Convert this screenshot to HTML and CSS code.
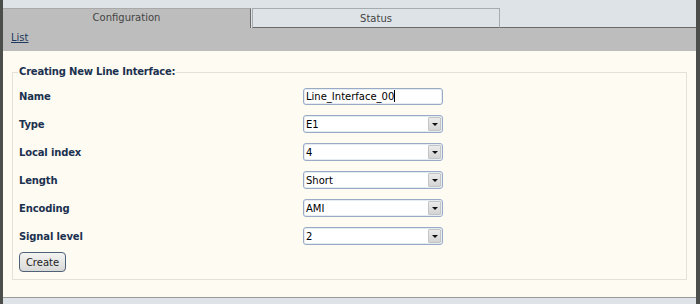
FILE: index.html
```html
<!DOCTYPE html>
<html>
<head>
<meta charset="utf-8">
<link rel="stylesheet" href="styles.css">
</head>
<body>
<div class="page">
  <div class="tabs">
    <div class="tab active">Configuration</div>
    <div class="tab">Status</div>
    <div class="tab-rest"></div>
  </div>
  <div class="bar"><a href="#" class="link">List</a></div>
  <div class="content">
    <fieldset class="box">
      <legend class="legend">Creating New Line Interface:</legend>
      <div class="form">
        <div class="label">Name</div>
        <div class="field"><div class="textbox">Line_Interface_00<span class="caret"></span></div></div>
        <div class="label">Type</div>
        <div class="field"><div class="select">E1<span class="arrow"></span></div></div>
        <div class="label">Local index</div>
        <div class="field"><div class="select">4<span class="arrow"></span></div></div>
        <div class="label">Length</div>
        <div class="field"><div class="select">Short<span class="arrow"></span></div></div>
        <div class="label">Encoding</div>
        <div class="field"><div class="select">AMI<span class="arrow"></span></div></div>
        <div class="label">Signal level</div>
        <div class="field"><div class="select">2<span class="arrow"></span></div></div>
      </div>
      <button class="btn" type="button">Create</button>
    </fieldset>
  </div>
  <div class="foot"></div>
</div>
</body>
</html>
```
FILE: styles.css
```css
* { box-sizing: border-box; }
html, body { margin: 0; padding: 0; }
body {
  background: #4b4e4b;
  font-family: "DejaVu Sans", Verdana, sans-serif;
  font-size: 10px;
  width: 700px;
  height: 304px;
  overflow: hidden;
}
.page {
  margin: 0 4px 0 3px;
  height: 304px;
  background: #dde3e6;
  display: flex;
  flex-direction: column;
}
.tabs {
  height: 28px;
  padding-top: 8px;
  display: flex;
  align-items: flex-end;
}
.tab {
  height: 20px;
  width: 248px;
  text-align: center;
  line-height: 19px;
  color: #444;
  background: #dde3e6;
  border: 1px solid #a6abae;
  border-bottom: 1px solid #6b6b6b;
  margin-left: 1px;
}
.tab.active {
  width: 248px;
  margin-left: 0;
  background: #bdbdbd;
  border: none;
  border-top: 1px solid #a9a9a9;
  border-right: 1px solid #6b6b6b;
  line-height: 18px;
}
.tab-rest {
  flex: 1;
  border-bottom: 1px solid #6b6b6b;
}
.bar {
  height: 23px;
  background: #bdbdbd;
  padding: 4px 0 0 8px;
}
.link {
  color: #1f3a5e;
  text-decoration: underline;
  font-size: 10px;
}
.content {
  height: 247px;
  background: #fefbf2;
  padding: 15px 9px 0 9px;
  border-bottom: 1px solid #9a9a9a;
}
.box {
  margin: 0;
  border: 1px solid #e3e1d8;
  padding: 0 6px 5px 6px;
  height: 214px;
}
.legend {
  padding: 0 1px;
  margin-left: -1px;
  font-weight: bold;
  color: #1b3150;
  font-size: 10px;
  line-height: 12px;
  letter-spacing: -0.2px;
}
.form {
  display: grid;
  grid-template-columns: 284px 140px;
  grid-auto-rows: 28px;
  align-items: center;
  padding-top: 4px;
}
.label {
  font-weight: bold;
  color: #1b3150;
  letter-spacing: -0.15px;
}
.textbox, .select {
  background: #fff;
  border: 1px solid #98aac4;
  border-radius: 3px;
  color: #000;
  padding-left: 2px;
  display: flex;
  align-items: center;
  box-shadow: inset 0 0 0 1px #e7ecf3;
}
.textbox { height: 17px; }
.select { height: 18px; }
.caret {
  display: inline-block;
  width: 1px;
  height: 12px;
  background: #000;
}
.arrow {
  margin-left: auto;
  margin-right: 1px;
  width: 13px;
  height: 14px;
  background: linear-gradient(#ebebeb, #d4d4d4);
  border: 1px solid #c4c4c4;
  border-radius: 1px;
  display: flex;
  align-items: center;
  justify-content: center;
}
.arrow::after {
  content: "";
  border-left: 3px solid transparent;
  border-right: 3px solid transparent;
  border-top: 3px solid #111;
  margin-top: 1px;
}
.btn {
  margin-top: 2px;
  width: 47px;
  height: 20px;
  padding: 0;
  font-family: "DejaVu Sans", Verdana, sans-serif;
  font-size: 10px;
  color: #222;
  background: linear-gradient(#f4f4f2, #d9d9d7);
  border: 1px solid #4f6278;
  border-radius: 4px;
}
.foot {
  flex: 1;
  background: #dde3e6;
}
```
